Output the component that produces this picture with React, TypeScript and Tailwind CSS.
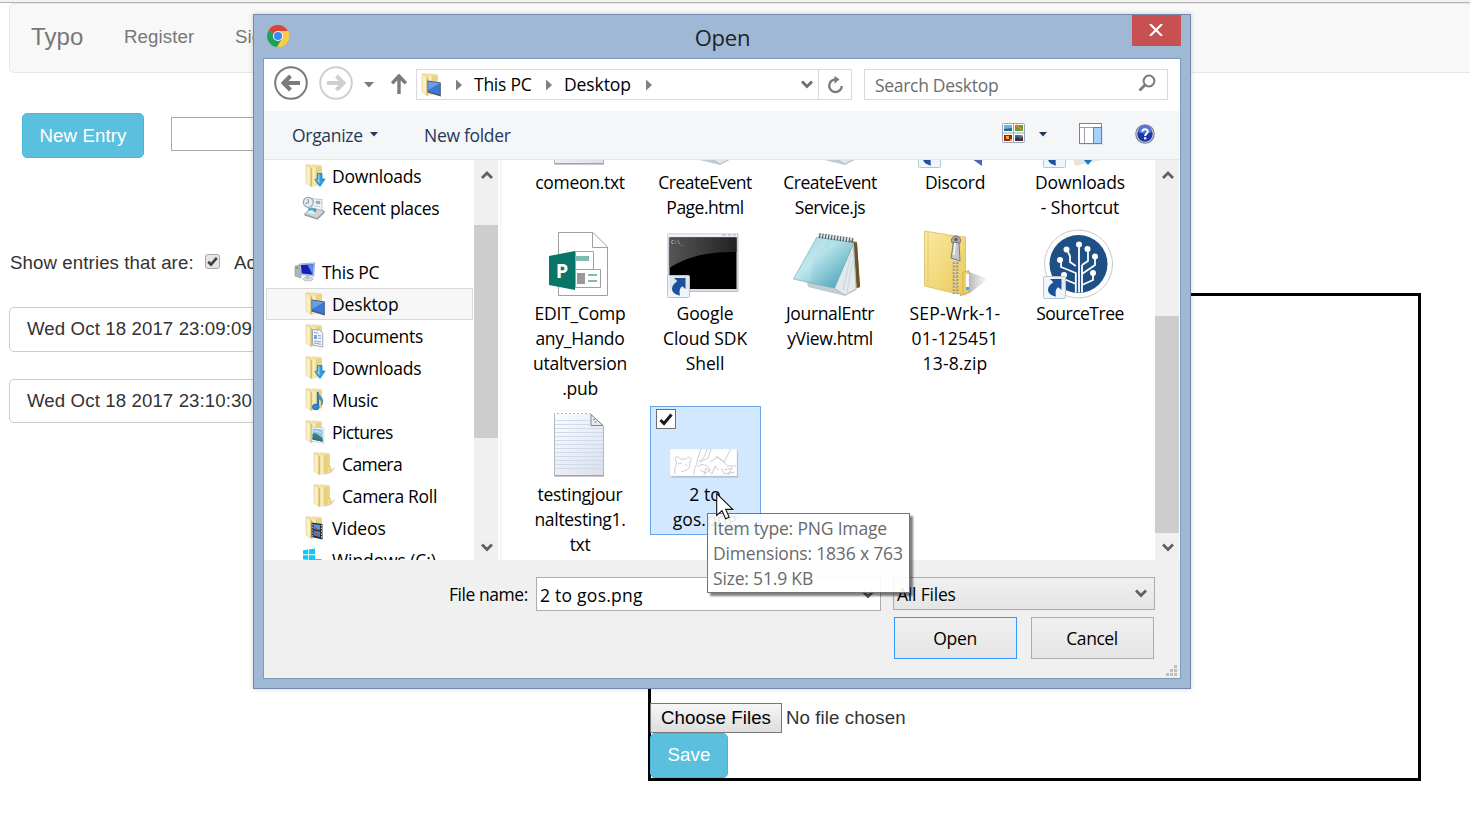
import React from "react";

const ui = "font-['Open_Sans','Noto_Sans',sans-serif]";

function Folder({ x = 0, shadow = false }: { x?: number; shadow?: boolean }) {
  return (
    <g transform={`translate(${x} 0)`}>
      {shadow && <path d="M12 19 L22.5 15.5 L18 20.5 L10 23Z" fill="#d2d2d2" />}
      <path d="M1.5 .8 L12.5 1.2 L16.5 2 V20 L7 22 L1.5 18Z" fill="#f3e3a0" stroke="#ddc67c" strokeWidth=".5" />
      <path d="M7 4 L11.5 3 V20.5 L7 22Z" fill="#f8ecb8" />
      <path d="M11.5 3 L16.3 2.2 V19.5 L11.5 20.8Z" fill="#ead184" />
      <path d="M1 1 L6.3 4.2 V22.8 L1 18.8Z" fill="#faf0c4" stroke="#dcc88a" strokeWidth=".6" />
      <path d="M5.4 4 L7.2 4.4 V22.4 L5.4 22Z" fill="#d6bc6c" />
      <path d="M11.2 3 V20.5" stroke="#d8bd6c" strokeWidth=".7" />
    </g>
  );
}

function Icon({ children, w = 24, h = 24 }: { children: React.ReactNode; w?: number; h?: number }) {
  return (
    <svg width={w} height={h} viewBox={`0 0 ${w} ${h}`} className="block shrink-0">
      {children}
    </svg>
  );
}

const DesktopIcon = () => (
  <Icon>
    <Folder />
    <path d="M6.5 7.5 L19.8 9.5 V23.4 L6.5 19.5Z" fill="#46566c" />
    <path d="M7.2 8.4 L18.8 10.3 V21.8 L7.2 18.4Z" fill="#3a78d6" />
    <path d="M7.2 8.4 L18.8 10.3 L7.2 17Z" fill="#6a9fe8" />
  </Icon>
);
const DownloadsIcon = () => (
  <Icon>
    <Folder />
    <path d="M12.3 9.5 H17 V15 H20 L15 22.5 L9.8 15.5 L12.3 15Z" fill="#2fa0e0" stroke="#1674b0" strokeWidth=".7" />
    <path d="M13 10.2 H14.6 V20 L11 15.7 H13Z" fill="#7ccbf3" />
  </Icon>
);
const DocumentsIcon = () => (
  <Icon>
    <Folder />
    <path d="M7.5 5.5 L14.5 6 L17.8 9 V23 L7.5 21Z" fill="#f2f5f9" stroke="#8d96a3" strokeWidth=".8" />
    <path d="M9 8.5 L13 9 M13 11.5 L16.3 12 M13 14 L16.3 14.5 M9 17 L16 18 M9 19 L16 20.3" stroke="#8aa5c6" strokeWidth="1" />
    <rect x="9" y="11" width="3" height="4" fill="#7aa6d0" />
  </Icon>
);
const MusicIcon = () => (
  <Icon>
    <Folder />
    <path d="M13 4.5 V18" fill="none" stroke="#1d6fae" strokeWidth="1.8" />
    <path d="M12.3 4 C14 8.5 20.5 10 16.5 17.5 C17.5 13 15.5 11 13 10.5Z" fill="#3b95d4" stroke="#1d6fae" strokeWidth=".6" />
    <ellipse cx="10.8" cy="19" rx="3.4" ry="2.9" fill="#2b8dd0" stroke="#1b619a" strokeWidth=".7" />
  </Icon>
);
const PicturesIcon = () => (
  <Icon>
    <Folder />
    <path d="M6.5 7 L18.8 8 V23.5 L6.5 21Z" fill="#fff" stroke="#b4b9c2" strokeWidth=".6" />
    <path d="M7.5 8.6 L17.6 9.6 V21.8 L7.5 19.6Z" fill="#86c3ea" />
    <path d="M7.5 14 L10 13 L17.6 18 V21.8 L7.5 19.6Z" fill="#3f7c6a" />
    <path d="M7.5 17.8 L17.6 20 V21.8 L7.5 19.6Z" fill="#2d6ba4" />
    <path d="M8 10.5 L16 12.5" stroke="#d3ebf8" strokeWidth="1.2" />
  </Icon>
);
const VideosIcon = () => (
  <Icon>
    <Folder />
    <path d="M6.5 6.5 L17.5 8 V23.5 L6.5 21Z" fill="#2b2e36" />
    <path d="M8.5 8 L15 9 V14 L8.5 13Z" fill="#4c9ade" />
    <path d="M8.5 14.5 L15 15.5 V21 L8.5 19.6Z" fill="#3f85c7" />
    <path d="M9.5 10 L13 13.5 L10 13Z M11 16 L14 20 L9.5 18.8Z" fill="#cf4a2a" />
    <path d="M7.3 8 V20.5 M16.5 9 V22.5" stroke="#d8dbe0" strokeWidth="1" strokeDasharray="1.3 1.5" />
  </Icon>
);
const PlainFolderIcon = () => (
  <Icon>
    <Folder shadow />
    <path d="M14 15 L17.6 14.3 V20.3 L13.5 21.5Z" fill="#f3dc82" stroke="#dec466" strokeWidth=".5" />
  </Icon>
);
const RecentIcon = () => (
  <Icon>
    <path d="M9 2.5 L20 3.5 V15 L10 14Z" fill="#f1f4f7" stroke="#a6afb9" strokeWidth=".7" />
    <path d="M14 5 L18 5.4 V8 L14 7.6Z M12 10 L18 10.7" fill="#7aa5cc" stroke="#9fb0c0" strokeWidth=".6" />
    <circle cx="6.3" cy="6.3" r="5" fill="#e3edf0" stroke="#8fa7ae" strokeWidth="1.2" />
    <path d="M6.3 3 V6.8 L3.5 7.5" fill="none" stroke="#66808c" strokeWidth=".9" />
    <path d="M2.5 18 L9 12 L22.5 15 L15 22.5Z" fill="#d1d5d9" stroke="#8a9197" strokeWidth=".7" />
    <path d="M15 22.5 L22.5 15 V17 L15.5 23.7 L2.5 19.5 V18Z" fill="#969da3" />
    <path d="M6.5 12 L14.5 12.8 L13.5 19 L5.5 17Z" fill="#4c9ac8" />
    <path d="M6 15 L10 14 L14 17 L13.5 19 L5.5 17Z" fill="#d8f0e8" />
  </Icon>
);
const PcIcon = () => (
  <Icon>
    <path d="M1 6 L7 4.5 V18 L1 16Z" fill="#aeb5bc" stroke="#8b9299" strokeWidth=".6" />
    <rect x="1.7" y="7" width="2.5" height="1.6" fill="#44bd3e" />
    <path d="M5.5 4 L20.7 2.8 L19.7 16.2 L6.5 14.5Z" fill="#cdd7ea" stroke="#8d9bb8" strokeWidth=".7" />
    <path d="M6.8 5 L19.4 4.2 L18.6 14.7 L7.7 13.4Z" fill="#1421b4" />
    <path d="M13.5 4.7 L19.4 4.2 L18.6 14.7Z" fill="#5b8cf0" />
    <ellipse cx="14" cy="19" rx="5.3" ry="2" fill="#d9dcdf" stroke="#abb0b5" strokeWidth=".6" />
    <path d="M11.5 15.5 H15 V19 H12Z" fill="#bac0c7" />
  </Icon>
);
const WindowsIcon = () => (
  <Icon>
    <path d="M0 2.2 L5 1.5 V6.3 H0Z M5.8 1.4 L12 .6 V6.3 H5.8Z M0 7.2 H5 V12 L0 11.2Z M5.8 7.2 H12 V13 L5.8 12.1Z" fill="#12c6f7" />
    <path d="M11 11 H18 L20 13 H7Z" fill="#9a9a9a" />
  </Icon>
);

const tree = [
  { label: "Downloads", pad: "pl-[39px]", icon: <DownloadsIcon />, gap: "ml-[3px] tracking-[-0.2px]" },
  { label: "Recent places", pad: "pl-[36px]", icon: <RecentIcon />, gap: "ml-[6px] tracking-[-0.35px]" },
  null,
  { label: "This PC", pad: "pl-[28px]", icon: <PcIcon />, gap: "ml-[4px]" },
  { label: "Desktop", pad: "pl-[39px]", icon: <DesktopIcon />, selected: true, gap: "ml-[3px] tracking-[-0.15px]" },
  { label: "Documents", pad: "pl-[39px]", icon: <DocumentsIcon /> },
  { label: "Downloads", pad: "pl-[39px]", icon: <DownloadsIcon />, gap: "ml-[3px] tracking-[-0.2px]" },
  { label: "Music", pad: "pl-[39px]", icon: <MusicIcon /> },
  { label: "Pictures", pad: "pl-[39px]", icon: <PicturesIcon />, gap: "ml-[3px] tracking-[-0.6px]" },
  { label: "Camera", pad: "pl-[47px]", icon: <PlainFolderIcon />, gap: "ml-[5px] tracking-[-0.6px]" },
  { label: "Camera Roll", pad: "pl-[47px]", icon: <PlainFolderIcon />, gap: "ml-[5px]" },
  { label: "Videos", pad: "pl-[39px]", icon: <VideosIcon />, gap: "ml-[3px] tracking-[-0.1px]" },
  { label: "Windows (C:)", pad: "pl-[37px]", icon: <WindowsIcon />, gap: "ml-[5px] tracking-[-0.1px]" },
];

function ShortcutBadge() {
  return (
    <g>
      <rect x=".5" y="43.5" width="22" height="22" rx="1" fill="#eef5fb" fillOpacity=".94" stroke="#b9c6d2" />
      <path
        d="M7 46 H18.5 V57 L15.3 54.2 C12.5 56 12.2 59 13 63.5 C9.5 63 5 60.5 5 57 C5 53.5 7.5 51 10.3 49.3Z"
        fill="#1d529a"
      />
    </g>
  );
}

function TextDoc() {
  const lines = Array.from({ length: 13 }, (_, i) => 9.5 + i * 4);
  return (
    <svg width="76" height="68" viewBox="0 0 76 68">
      <defs>
        <linearGradient id="sheet" x1="0" y1="0" x2="1" y2="1">
          <stop offset="0" stopColor="#fdfdfe" />
          <stop offset="1" stopColor="#dcdfea" />
        </linearGradient>
      </defs>
      <path d="M13.5 2.5 H49 L62.5 15 V64.5 H13.5Z" fill="url(#sheet)" stroke="#b4b8c2" strokeWidth="1" />
      <path d="M13.5 65 H63" stroke="#8c919d" strokeWidth="1" />
      {lines.map((y) => (
        <path key={y} d={`M14 ${y} H${y < 14 ? 49 : 62}`} stroke="#cfdbec" strokeWidth="1" />
      ))}
      <path d="M14 2 H49" stroke="#fff" strokeWidth="2" strokeDasharray="2 2" />
      <path d="M50 3.5 V14.5 H62Z" fill="#e9ebf0" stroke="#80858f" strokeWidth="1" />
      <path d="M53 11 H56 M52 8.5 H54" stroke="#8b909a" strokeWidth="1" />
    </svg>
  );
}

function Notebook() {
  return (
    <svg width="76" height="68" viewBox="0 0 76 68">
      <defs>
        <linearGradient id="cover" x1="0" y1="0" x2="1" y2="1">
          <stop offset="0" stopColor="#8fcbd6" />
          <stop offset=".4" stopColor="#b4e2ea" />
          <stop offset="1" stopColor="#3697ae" />
        </linearGradient>
      </defs>
      <path d="M58 10 L66 12 L69 57 L60 60Z" fill="#ad8747" />
      <path d="M62 12 L66 13 L69 57 L66 58Z" fill="#6d5327" />
      <path d="M16 52 L60 14 L63 14 L65.5 60 L54 66 L17 57Z" fill="#c0ccd3" />
      <path d="M62 14 L43 58 L54 65 L65 59Z" fill="#e2eaee" stroke="#a4b1b8" strokeWidth=".6" />
      <path d="M60 24 L52 60 M62 30 L56 62" stroke="#bfcdd4" strokeWidth=".8" />
      <path d="M26 7 L63 12.5 L43.5 58 L2.5 49Z" fill="url(#cover)" stroke="#69aab8" strokeWidth=".7" />
      <path d="M26 7 L38 9 L22 30 L20 52 L2.5 49Z" fill="#fff" fillOpacity=".16" />
      <path d="M28 5.5 L63 10.5" stroke="#55616a" strokeWidth="5" strokeDasharray="1.5 1.5" />
      <path d="M27 4 L63 9" stroke="#d7dcdf" strokeWidth="1.6" strokeDasharray="1.5 1.5" />
    </svg>
  );
}

function Publisher() {
  return (
    <svg width="76" height="68" viewBox="0 0 76 68">
      <path d="M17.5 2.5 H52 L66.5 17 V65.5 H17.5Z" fill="#fff" stroke="#a0a0a0" />
      <path d="M51.5 2.5 V17.5 H66.5" fill="none" stroke="#a0a0a0" />
      <path d="M34.5 21.5 H52.5 V39.5 H34.5Z" fill="#fff" stroke="#a0a0a0" />
      <rect x="34" y="26" width="14" height="5" fill="#7fbab3" />
      <path d="M34.5 39.5 H59.5 V57.5 H34.5Z" fill="#fff" stroke="#a0a0a0" />
      <rect x="36" y="43" width="8" height="11" fill="#999" />
      <path d="M47 45 H56 M47 51 H56" stroke="#7fbab3" strokeWidth="2" />
      <path d="M8 26 L34 21 V60 L8 55Z" fill="#077568" />
      <text x="21" y="48" textAnchor="middle" fontSize="20" fontWeight="bold" fill="#fff" fontFamily="Open Sans">
        P
      </text>
    </svg>
  );
}

function Console() {
  return (
    <svg width="76" height="68" viewBox="0 0 76 68" className="overflow-visible">
      <defs>
        <linearGradient id="glare" x1="0" y1="0" x2="1" y2="0">
          <stop offset="0" stopColor="#555" />
          <stop offset="1" stopColor="#222" />
        </linearGradient>
      </defs>
      <g transform="translate(1 0)">
        <rect x="1" y="4" width="70" height="57.5" fill="#d8dfe8" stroke="#aeb7c2" strokeWidth=".8" />
        <path d="M1 5.5 H70" stroke="#f5f8fb" strokeWidth="2" />
        <path d="M55 5 H59 M61 5 H64 M66 5 H69" stroke="#a5afbb" strokeWidth="1.2" />
        <rect x="2.5" y="7.5" width="67" height="51.5" fill="#000" />
        <path d="M2.5 7.5 H69.5 V22 C45 21 20 26 2.5 38Z" fill="url(#glare)" />
        <text x="4" y="14" fontSize="5" fill="#ddd" fontFamily="DejaVu Sans Mono">C:\_</text>
      </g>
      <g transform="translate(1 2)">
        <ShortcutBadge />
      </g>
    </svg>
  );
}

function Zip() {
  return (
    <svg width="76" height="68" viewBox="0 0 76 68">
      <defs>
        <linearGradient id="zipf" x1="0" y1="0" x2="1" y2="1">
          <stop offset="0" stopColor="#faeaa4" />
          <stop offset="1" stopColor="#e9c95a" />
        </linearGradient>
        <linearGradient id="zshade" x1="0" y1="0" x2="1" y2="0">
          <stop offset="0" stopColor="#999" />
          <stop offset="1" stopColor="#fff" />
        </linearGradient>
      </defs>
      <path d="M48 40 L72 49 L54 63 L44 66Z" fill="url(#zshade)" />
      <path d="M8.5 1 L33 5 L49.5 7 V65 L33 62 L8.5 56Z" fill="url(#zipf)" stroke="#d9bd5c" strokeWidth=".8" />
      <path d="M12 2 V56.5" stroke="#dcc369" strokeWidth=".7" />
      <path d="M47 42 L53 40.5 V62 L47 65Z" fill="#edcf66" stroke="#cda93f" strokeWidth=".7" />
      <rect x="50" y="44" width="3" height="16" fill="#fff" />
      <rect x="50" y="57" width="3" height="3" fill="#47a3ee" />
      <path d="M39.5 32 V64" stroke="#8e8e88" strokeWidth="5.5" strokeDasharray="1.8 1.6" />
      <path d="M39.5 32 V64" stroke="#dedede" strokeWidth="2" strokeDasharray="1.2 2.2" />
      <circle cx="40" cy="10.5" r="4.5" fill="#a7abaf" stroke="#6c7073" />
      <path d="M37.5 12 L43 13 L44 31 L35 28Z" fill="#c5c9cc" stroke="#777b7e" strokeWidth="1" />
      <path d="M39 13 L38 25" stroke="#f8f8f8" strokeWidth="1.6" />
      <circle cx="40" cy="9.5" r="1.7" fill="#5c6063" />
    </svg>
  );
}

function SourceTree() {
  return (
    <svg width="76" height="68" viewBox="0 0 76 68" className="overflow-visible">
      <circle cx="37.5" cy="34" r="34" fill="#fff" stroke="#c9c9c9" />
      <circle cx="37.5" cy="34" r="29" fill="#1e5085" />
      <g stroke="#fff" strokeWidth="1.8" fill="none">
        <path d="M38 14 V62.5 M34.8 62.5 V43 L20 37 V30 M34.8 36 L29 32 V26 L26 20 M41 35 L47 31 V20 M41 44 L54 35 V27 M34.8 54 L23 49 V45 M41 55 L52 50 V44 M41 62.5 V35" />
      </g>
      <g fill="#fff">
        <circle cx="38" cy="14.5" r="3" />
        <circle cx="25.5" cy="19.5" r="3" />
        <circle cx="46.5" cy="19" r="3" />
        <circle cx="54" cy="26.5" r="3" />
        <circle cx="19" cy="30" r="3" />
        <circle cx="52" cy="43" r="3" />
        <circle cx="23" cy="45" r="3" />
      </g>
      <g transform="translate(2 3)">
        <ShortcutBadge />
      </g>
    </svg>
  );
}

function DiscordTail() {
  return (
    <svg width="76" height="68" viewBox="0 0 76 68" className="overflow-visible">
      <path d="M14 4 H66 V67 L56 60 H14Z" fill="#5163bf" />
      <path d="M14 40 H54 L52 61 H14Z" fill="#f7f7f7" />
      <g transform="translate(2 3)">
        <ShortcutBadge />
      </g>
    </svg>
  );
}

function DownloadsTail() {
  return (
    <svg width="76" height="68" viewBox="0 0 76 68" className="overflow-visible">
      <path d="M24 20 L60 54 L74 58 L34 67Z" fill="#e8e4da" />
      <path d="M34 50 H60 L47 66Z" fill="#0f7dc8" />
      <g transform="translate(2 3)">
        <ShortcutBadge />
      </g>
    </svg>
  );
}

function Sketch() {
  return (
    <svg width="76" height="68" viewBox="0 0 76 68" className="overflow-visible">
      <rect x="5.5" y="39.5" width="66.5" height="27" fill="#8e9aa8" fillOpacity=".65" />
      <rect x="4" y="38" width="67" height="27" fill="#fff" stroke="#e2e2e2" strokeWidth=".5" />
      <g fill="none" stroke="#b9b9b9" strokeWidth=".7" transform="translate(0 1)">
        <path d="M9 62 C7 56 12 53 10 49 C8 44 12 43 14 47 L20 47 C23 43 27 46 24 50 C23 53 25 55 21 58 L15 60 M12 52 L16 51 M19 52 L21 54" />
        <path d="M28 63 C27 57 31 54 31 49 L35 37 M41 37 C39 43 38 48 33 49 M45 37 L42 46 L34 50 M31 55 C35 51 41 52 44 58 M38 63 L40 56 L46 62 L49 54 L52 58" />
        <path d="M44 50 L52 45 L61 53 M50 44 L58 50 L65 37 M61 54 L70 54 M58 58 L66 56 L62 63 M55 56 L58 62 L69 60 M34 58 L40 61 L45 57" />
      </g>
    </svg>
  );
}

const files = [
  { lines: ["comeon.txt"], icon: <TextDoc /> },
  { lines: ["CreateEvent", "Page.html"], icon: <Notebook />, spacing: "tracking-[-0.5px]" },
  { lines: ["CreateEvent", "Service.js"], icon: <Notebook />, spacing: "tracking-[-0.5px]" },
  { lines: ["Discord"], icon: <DiscordTail /> },
  { lines: ["Downloads", "- Shortcut"], icon: <DownloadsTail />, spacing: "tracking-[-0.15px]" },
  { lines: ["EDIT_Comp", "any_Hando", "utaltversion", ".pub"], icon: <Publisher />, spacing: "tracking-[-0.25px]" },
  { lines: ["Google", "Cloud SDK", "Shell"], icon: <Console />, spacing: "tracking-[-0.1px]" },
  { lines: ["JournalEntr", "yView.html"], icon: <Notebook />, spacing: "tracking-[-0.35px]" },
  { lines: ["SEP-Wrk-1-", "01-125451", "13-8.zip"], icon: <Zip />, spacing: "tracking-[0.15px]" },
  { lines: ["SourceTree"], icon: <SourceTree />, spacing: "tracking-[-0.5px]" },
  { lines: ["testingjour", "naltesting1.", "txt"], icon: <TextDoc /> },
  { lines: ["2 to", "gos.png"], icon: <Sketch />, selected: true, spacing: "tracking-[0.1px]" },
];

function Chevron({ up = false, color = "#606060" }: { up?: boolean; color?: string }) {
  return (
    <svg width="12" height="9" viewBox="0 0 12 9" className="block shrink-0">
      <path d={up ? "M1 7 L6 2 L11 7" : "M1 1.5 L6 6.5 L11 1.5"} fill="none" stroke={color} strokeWidth="2.8" />
    </svg>
  );
}

function Scrollbar({ top, thumb }: { top: string; thumb: string }) {
  return (
    <div className="flex h-full w-6 shrink-0 flex-col bg-[#f0f0f0]">
      <div className="flex h-[30px] shrink-0 items-center justify-center pl-px">
        <Chevron up />
      </div>
      <div className={`shrink-0 ${top}`} />
      <div className={`shrink-0 bg-[#cdcdcd] ${thumb}`} />
      <div className="mt-auto flex h-[26px] shrink-0 items-center justify-center pl-px">
        <Chevron />
      </div>
    </div>
  );
}

function Crumb() {
  return (
    <svg width="6" height="12" viewBox="0 0 6 12" className="shrink-0">
      <path d="M0 .5 L6 6 L0 11.5Z" fill="#808080" />
    </svg>
  );
}

function TitleBar() {
  return (
    <div className="flex h-[43px] items-start">
      <svg width="22" height="22" viewBox="0 0 22 22" className="ml-[13px] mt-[10px]">
        <circle cx="11" cy="11" r="11" fill="#fbc943" />
        <path d="M11 11 L1.5 5.5 A11 11 0 0 1 20.6 5.6 L20.9 6.2 H11Z" fill="#db4437" />
        <path d="M1.5 5.5 A11 11 0 0 0 10 22 L15 14 L11 11Z" fill="#1da15f" />
        <path d="M11 6 H20.8 A11 11 0 0 1 10.2 22 L15.3 13.3Z" fill="#fdcb44" />
        <circle cx="11" cy="11" r="5.1" fill="#f3f6fb" />
        <circle cx="11" cy="11" r="4.1" fill="#4285f4" />
      </svg>
      <div className="flex-1 pl-[24px] pt-[7px] text-center text-[22px] leading-[30px] tracking-[-0.2px] text-[#222]">
        <span>Open</span>
      </div>
      <div className="mr-[9px] flex h-[31px] w-[49px] items-center justify-center bg-[#c75050] pb-px pr-px">
        <svg width="14" height="12" viewBox="0 0 14 12">
          <path d="M1 0 L13 12 M13 0 L1 12" stroke="#fff" strokeWidth="2.2" />
        </svg>
      </div>
    </div>
  );
}

function NavRow() {
  return (
    <div className="flex h-[52px] items-start bg-white">
      <svg width="34" height="34" viewBox="0 0 34 34" className="ml-[10px] mt-[7px]">
        <circle cx="17" cy="17" r="15.8" fill="none" stroke="#7b7b7b" strokeWidth="2" />
        <path d="M9 17 H26 M16.5 10 L9.5 17 L16.5 24" fill="none" stroke="#7b7b7b" strokeWidth="4" />
      </svg>
      <svg width="34" height="34" viewBox="0 0 34 34" className="ml-[11px] mt-[7px]">
        <circle cx="17" cy="17" r="15.8" fill="none" stroke="#cfcfcf" strokeWidth="2" />
        <path d="M8 17 H25 M17.5 10 L24.5 17 L17.5 24" fill="none" stroke="#cfcfcf" strokeWidth="4" />
      </svg>
      <svg width="10" height="6" viewBox="0 0 10 6" className="ml-[11px] mt-[23px]">
        <path d="M0 0 H10 L5 5.5Z" fill="#7b7b7b" />
      </svg>
      <svg width="16" height="20" viewBox="0 0 16 20" className="ml-[17px] mt-[15px]">
        <path d="M8 20 V2 M1.2 9.3 L8 2 L14.8 9.3" fill="none" stroke="#7b7b7b" strokeWidth="3.4" />
      </svg>
      <div className="ml-[9px] mt-[10px] flex h-[31px] w-[436px] shrink-0 items-center border border-[#d9d9d9] text-[17.5px] tracking-[-0.25px] text-black">
        <div className="ml-[4px] w-[25px]">
          <DesktopIcon />
        </div>
        <div className="ml-[10px]"><Crumb /></div>
        <span className="ml-[12px] w-[72px] whitespace-nowrap">This PC</span>
        <Crumb />
        <span className="ml-[12px] w-[82px] whitespace-nowrap tracking-[-0.1px]">Desktop</span>
        <Crumb />
        <div className="ml-auto mr-[5px]">
          <Chevron color="#707070" />
        </div>
        <div className="flex h-full w-[33px] items-center justify-center border-l border-[#d9d9d9]">
          <svg width="17" height="18" viewBox="0 0 17 18">
            <path d="M9 3.5 A6.3 6.3 0 1 0 14.8 10" fill="none" stroke="#7b7b7b" strokeWidth="2.4" />
            <path d="M7.5 0 L12.5 3.2 L7.5 7.8Z" fill="#7b7b7b" />
          </svg>
        </div>
      </div>
      <div className="ml-[12px] mt-[10px] flex h-[31px] w-[304px] shrink-0 items-center border border-[#d9d9d9] pl-[10px] pr-[11px] text-[17.5px] tracking-[-0.3px] text-[#6d6d6d]">
        <span className="pt-[2px]">Search Desktop</span>
        <svg width="18" height="18" viewBox="0 0 18 18" className="mb-[3px] ml-auto">
          <circle cx="11" cy="7" r="5.4" fill="none" stroke="#7b7b7b" strokeWidth="2" />
          <path d="M7.5 10.5 L1.5 16.5" stroke="#7b7b7b" strokeWidth="2.8" />
        </svg>
      </div>
    </div>
  );
}

function Toolbar() {
  return (
    <div className="flex h-[49px] items-center border-b border-[#e6e7e8] bg-[#f5f6f7] pl-[28px] text-[17.5px] tracking-[-0.3px] text-[#1e395b]">
      <span className="w-[78px] whitespace-nowrap">Organize</span>
      <svg width="8" height="5" viewBox="0 0 8 5" className="mb-px">
        <path d="M0 0 H8 L4 4.5Z" fill="#1e395b" />
      </svg>
      <span className="ml-[46px]">New folder</span>
      <svg width="23" height="20" viewBox="0 0 23 20" className="ml-auto mb-[4px]">
        <rect x=".5" y=".5" width="22" height="19" rx="1" fill="#fff" stroke="#9aa8ba" />
        <path d="M11.5 0 V20 M0 10 H23" stroke="#9aa8ba" />
        <rect x="2" y="2" width="8" height="6" fill="#67b3df" />
        <path d="M2 6 L10 5 V8 H2Z" fill="#286c6e" />
        <rect x="13" y="2" width="8" height="6" fill="#5f9d3a" />
        <path d="M14 2 L20 7" stroke="#e8782b" strokeWidth="2" />
        <rect x="2" y="12" width="8" height="6" fill="#9a2410" />
        <path d="M4 13 H7 V16 H4Z M8 16 H10 V18 H8Z" fill="#f1a528" />
        <rect x="13" y="12" width="8" height="6" fill="#3670ad" />
        <path d="M13 18 V15 L16 14 L18 16 L21 14 V18Z" fill="#492d29" />
        <path d="M18 12 H21 V14Z" fill="#e78a3d" />
      </svg>
      <svg width="8" height="5" viewBox="0 0 8 5" className="ml-[14px] mb-px">
        <path d="M0 0 H8 L4 4.5Z" fill="#1e395b" />
      </svg>
      <svg width="24" height="22" viewBox="0 0 24 22" className="ml-[32px] mb-[2px]">
        <rect x=".5" y=".5" width="22" height="20" fill="#fff" stroke="#7d8289" />
        <path d="M1 4.5 H22 M5.5 5 V20" stroke="#9a9fa5" />
        <path d="M2 22 H24 V3" stroke="#d5d7d9" fill="none" />
        <rect x="14.5" y="4.5" width="8" height="16" fill="#a3d3fb" stroke="#3b8ddd" />
      </svg>
      <svg width="20" height="20" viewBox="0 0 20 20" className="ml-[32px] mr-[25px] mb-[2px]">
        <circle cx="10" cy="10" r="9.2" fill="#d9dce2" stroke="#80858e" strokeWidth="1.2" />
        <circle cx="10" cy="10" r="7.7" fill="#1b36ad" />
        <path d="M3 8 A7 7 0 0 1 17 8 Q10 11 3 8Z" fill="#5274d6" />
        <path d="M7.2 7.8 C7.2 4.2 13 4.4 12.8 7.6 C12.7 9.5 10.2 9.5 10.2 12" fill="none" stroke="#fff" strokeWidth="2" />
        <rect x="9.1" y="13.2" width="2.2" height="2.2" fill="#fff" />
      </svg>
    </div>
  );
}

function Sidebar() {
  return (
    <div className="flex w-[238px] shrink-0 border-r-2 border-[#f7f7f7] text-[17.5px] tracking-[-0.3px] text-black">
      <div className="h-[400px] w-[210px] overflow-hidden pl-[2px]">
        {tree.map((row, i) =>
          row ? (
            <div
              key={i}
              className={`flex h-8 w-[207px] items-center whitespace-nowrap border ${row.pad} ${
                row.selected ? "border-[#d9d9d9] bg-[#f7f7f7]" : "border-transparent"
              }`}
            >
              <div className="-ml-px w-6">{row.icon}</div>
              <span className={row.gap ?? "ml-[3px]"}>{row.label}</span>
            </div>
          ) : (
            <div key={i} className="h-8" />
          ),
        )}
      </div>
      <Scrollbar top="h-[35px]" thumb="h-[213px]" />
    </div>
  );
}

function FileGrid() {
  return (
    <div className="h-[400px] min-w-0 flex-1 overflow-hidden pl-[23px]">
      <div className="-mt-[66px] grid w-[611px] grid-cols-[repeat(5,111px)] items-start gap-x-[14px] gap-y-[2px]">
        {files.map((file, i) => (
          <div
            key={i}
            className={`relative flex flex-col items-center border pb-[2px] ${
              file.selected ? "border-[#66a7e8] bg-[#d1e8ff]" : "border-transparent"
            }`}
          >
            {file.selected && (
              <div className="absolute left-[5px] top-[2px] flex h-5 w-5 items-center justify-center border border-[#707070] bg-white">
                <svg width="14" height="13" viewBox="0 0 14 13">
                  <path d="M1.5 7 L5 10.5 L12.5 1.5" fill="none" stroke="#1c1c1c" strokeWidth="3" />
                </svg>
              </div>
            )}
            <div className="h-[75px] pr-[3px] pt-[4px]">{file.icon}</div>
            {file.lines.map((line) => (
              <span
                key={line}
                className={`whitespace-nowrap pr-px text-[17.5px] leading-[25px] text-black ${file.spacing ?? "tracking-[-0.3px]"}`}
              >
                {line}
              </span>
            ))}
          </div>
        ))}
      </div>
    </div>
  );
}

function DialogFooter() {
  return (
    <div className="relative h-[118px] bg-[#f0f0f0] pt-[17px] text-[17.5px] tracking-[-0.3px] text-black">
      <div className="flex items-start">
        <span className="ml-[185px] w-[87px] whitespace-nowrap pt-[4px] tracking-[-0.45px]">File name:</span>
        <div className="flex h-[34px] w-[345px] items-center justify-between border border-[#abadb3] bg-white pl-[3px] pr-[6px]">
          <span className="pt-[2px] tracking-[0.25px]">2 to gos.png</span>
          <Chevron />
        </div>
        <div className="ml-[12px] flex h-[33px] w-[262px] items-center justify-between border border-[#acacac] bg-linear-to-b from-[#f0f0f0] to-[#e5e5e5] pl-[3px] pr-[7px]">
          <span className="pt-px tracking-[-0.2px]">All Files</span>
          <Chevron />
        </div>
      </div>
      <div className="mt-[6px] flex pl-[630px]">
        <button className="h-[42px] w-[123px] border border-[#3399ff] bg-linear-to-b from-[#f0f0f0] to-[#e5e5e5] pr-px">Open</button>
        <button className="ml-[14px] h-[42px] w-[123px] border border-[#acacac] bg-linear-to-b from-[#f0f0f0] to-[#e5e5e5] pr-px tracking-[-0.45px]">Cancel</button>
      </div>
      <svg width="11" height="11" viewBox="0 0 11 11" className="absolute bottom-[2px] right-[3px]">
        <path d="M8 0h3v3h-3z M4 4h3v3h-3z M8 4h3v3h-3z M0 8h3v3h-3z M4 8h3v3h-3z M8 8h3v3h-3z" fill="#bfbfbf" />
      </svg>
    </div>
  );
}

function OpenDialog() {
  return (
    <div className={`absolute left-[253px] top-[14px] h-[675px] w-[938px] border border-[#7389a5] bg-[#9fb8d6] shadow-[0_0_5px_rgba(0,0,0,0.18)] ${ui}`}>
      <TitleBar />
      <div className="mx-[9px] h-[621px] border border-[#7f9bbb] bg-white">
        <NavRow />
        <Toolbar />
        <div className="flex h-[400px]">
          <Sidebar />
          <FileGrid />
          <Scrollbar top="h-[126px]" thumb="h-[217px]" />
          <div className="w-px bg-white" />
        </div>
        <DialogFooter />
      </div>
    </div>
  );
}

export default function App() {
  return (
    <div className="relative h-[815px] w-[1470px] overflow-hidden bg-white font-['Liberation_Sans',Arial,sans-serif] text-[18.67px] tracking-[0.1px] text-[#333]">
      <div className="h-[3px] border-b border-[#b4b4b4] bg-[#f2f2f2]" />
      <nav className="ml-[9px] flex h-[70px] w-[1600px] items-center rounded-[5px] border border-[#e7e7e7] bg-[#f8f8f8] pb-[2px] text-[#777]">
        <span className="ml-[21px] w-[93px] text-[24px]">Typo</span>
        <span className="w-[111px]">Register</span>
        <span>Sign in</span>
      </nav>
      <div className="flex">
        <div className="w-[648px]">
          <div className="ml-[22px] mt-[40px] flex items-start">
            <button className="h-[45px] w-[122px] rounded-[5px] border border-[#46b8da] bg-[#5bc0de] text-white">New Entry</button>
            <div className="ml-[27px] mt-[4px] h-[34px] w-[230px] border border-[#a9a9a9]" />
          </div>
          <div className="ml-[10px] mt-[91px] flex h-[27px] items-center">
            <span className="w-[195px] whitespace-nowrap">Show entries that are:</span>
            <div className="mb-[3px] flex h-[15px] w-[15px] items-center justify-center rounded-[3px] border border-[#a8a8a8] bg-[#e6e6e6]">
              <svg width="11" height="11" viewBox="0 0 11 11">
                <path d="M1.2 5.8 L4 8.6 L9.8 1.8" fill="none" stroke="#404040" strokeWidth="2.7" />
              </svg>
            </div>
            <span className="ml-[14px]">Active</span>
          </div>
          <div className="ml-[9px] mt-[31px] flex h-[45px] w-[600px] items-center rounded-[5px] border border-[#ccc] pb-[2px] pl-[17px]">Wed Oct 18 2017 23:09:09</div>
          <div className="ml-[9px] mt-[27px] flex h-[44px] w-[600px] items-center rounded-[5px] border border-[#ccc] pl-[17px]">Wed Oct 18 2017 23:10:30</div>
        </div>
        <div className="mt-[220px] flex h-[488px] w-[773px] flex-col justify-end border-[3px] border-black">
          <div className="-ml-px flex h-[30px] items-center">
            <button className="h-[30px] w-[132px] whitespace-nowrap border border-[#767676] bg-linear-to-b from-[#f6f6f6] to-[#dedede] text-black">Choose Files</button>
            <span className="ml-[4px]">No file chosen</span>
          </div>
          <button className="-ml-px h-[45px] w-[78px] rounded-[5px] border border-[#46b8da] bg-[#5bc0de] pb-[2px] text-white">Save</button>
        </div>
      </div>

      <OpenDialog />

      <div className={`absolute left-[707px] top-[513px] h-[80px] w-[203px] whitespace-nowrap border border-[#767676] bg-white/90 pl-[5px] pt-[2px] text-[17.5px] leading-[25px] tracking-[-0.18px] text-[#6a6a6a] shadow-[3px_3px_2px_rgba(0,0,0,0.5)] ${ui}`}>
        <div>Item type: PNG Image</div>
        <div>Dimensions: 1836 x 763</div>
        <div>Size: 51.9 KB</div>
      </div>
      <svg width="20" height="28" viewBox="0 0 20 28" className="absolute left-[716px] top-[492px]">
        <path d="M.7 1.5 V23.5 L6 18.6 L9.6 26.8 L13.2 25.2 L9.7 17.4 H16.8Z" fill="#fff" stroke="#111" strokeWidth="1.1" />
      </svg>
    </div>
  );
}
